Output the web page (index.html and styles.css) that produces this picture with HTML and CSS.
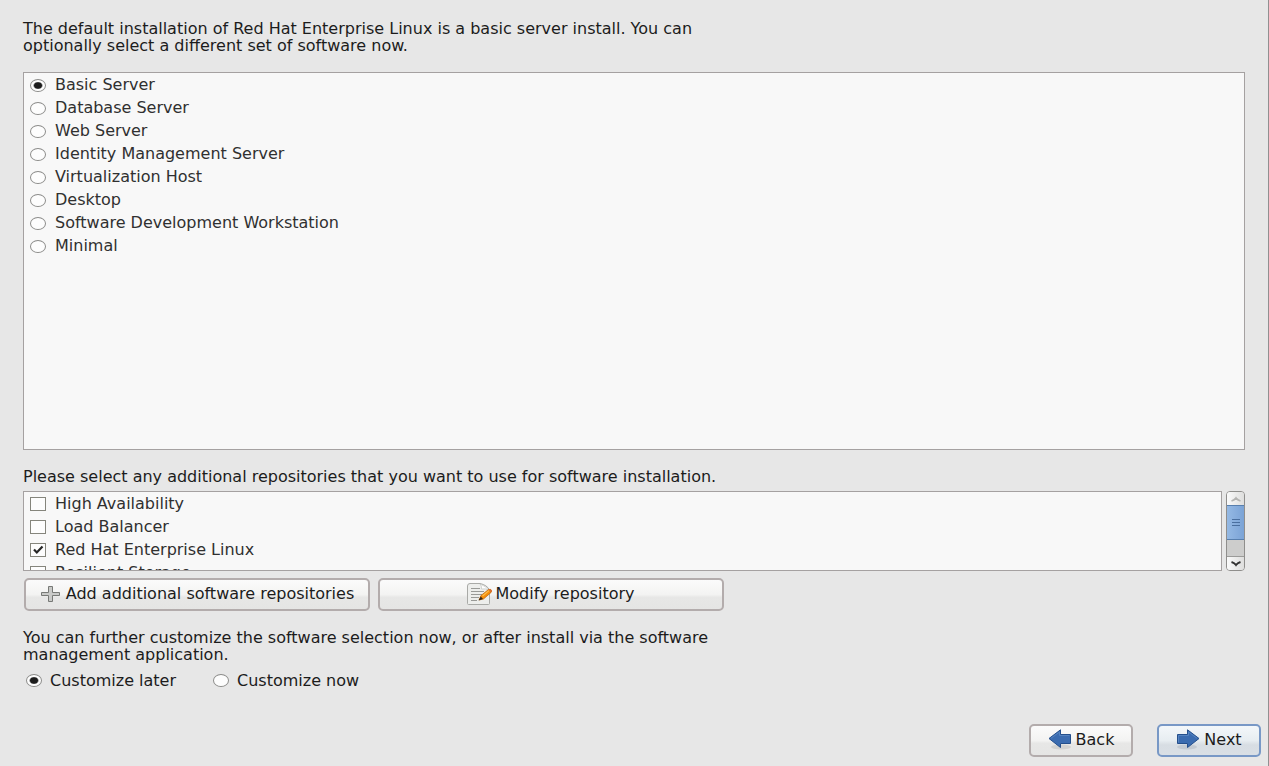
FILE: index.html
```html
<!DOCTYPE html>
<html lang="en">
<head>
<meta charset="utf-8">
<title>Software selection</title>
<link rel="stylesheet" href="styles.css">
</head>
<body>
<form class="installer">
  <main class="content">
    <p class="text intro">The default installation of Red Hat Enterprise Linux is a basic server install. You can optionally select a different set of software now.</p>

    <div class="panel packages" role="radiogroup" aria-label="Software set">
      <label class="row"><input class="radio" type="radio" name="set" checked>Basic Server</label>
      <label class="row"><input class="radio" type="radio" name="set">Database Server</label>
      <label class="row"><input class="radio" type="radio" name="set">Web Server</label>
      <label class="row"><input class="radio" type="radio" name="set">Identity Management Server</label>
      <label class="row"><input class="radio" type="radio" name="set">Virtualization Host</label>
      <label class="row"><input class="radio" type="radio" name="set">Desktop</label>
      <label class="row"><input class="radio" type="radio" name="set">Software Development Workstation</label>
      <label class="row"><input class="radio" type="radio" name="set">Minimal</label>
    </div>

    <p class="text wide">Please select any additional repositories that you want to use for software installation.</p>

    <div class="repos">
      <div class="panel repo-list">
        <label class="row"><input class="check" type="checkbox">High Availability</label>
        <label class="row"><input class="check" type="checkbox">Load Balancer</label>
        <label class="row"><input class="check" type="checkbox" checked>Red Hat Enterprise Linux</label>
        <label class="row"><input class="check" type="checkbox">Resilient Storage</label>
      </div>
      <div class="scrollbar">
        <button class="step" type="button" aria-label="Scroll up" disabled>
          <svg class="chevron" viewBox="0 0 10 6"><path d="M0.500 5Q3.500 4 5 2Q6.500 4 9.500 5" fill="none" stroke="#b4b4b2" stroke-width="1.800"/></svg>
        </button>
        <div class="thumb"><svg class="grip" viewBox="0 0 8 8"><path d="M0 .5H8M0 3.500H8M0 6.500H8" stroke="#4a6f9f"/></svg></div>
        <div class="trough"></div>
        <button class="step" type="button" aria-label="Scroll down">
          <svg class="chevron" viewBox="0 0 10 6"><path d="M0.500 1Q3.500 2 5 4Q6.500 2 9.500 1" fill="none" stroke="#333" stroke-width="2"/></svg>
        </button>
      </div>
    </div>

    <div class="repo-actions">
      <button class="button" type="button">
        <svg class="icon-plus" viewBox="0 0 21 18"><path d="M8.500 1.500H12.500V7.500H19.500V10.500H12.500V16.500H8.500V10.500H1.500V7.500H8.500Z" fill="#c9cac8" stroke="#777976"/></svg>
        Add additional software repositories
      </button>
      <button class="button" type="button">
        <svg class="icon-edit" viewBox="0 0 25 22">
          <path d="M3 .5H13Q20 2 22.500 7V20.500Q22.500 21.500 21.500 21.500H1.500Q.5 21.500 .5 20.500V3Q.5 .5 3 .5Z" fill="#edeeec" stroke="#a9aaa7"/>
          <path d="M13 1Q15 3 14.500 6Q19 5 22 7.500Q19 3 13 1Z" fill="#fff" stroke="#bbbcb9" stroke-width=".6"/>
          <path d="M4 5.500H13M4 8.500H17M4 11.500H15M4 14.500H12M4 17.500H10" stroke="#999a97"/>
          <path d="M12 17L14 12.500L21.500 6.500Q24 5.500 24.700 8L24 9.500L16.500 16Z" fill="#f58d0a" stroke="#b9610a" stroke-width=".7"/>
          <path d="M15.500 13L22 7.600" stroke="#ffc04a" stroke-width="1.200"/>
          <path d="M11.500 17.500L13.800 13.500L16 16Z" fill="#39291a"/>
          <path d="M21.500 6.500L24 9.500L24.800 8Q24 5.200 21.500 6.500Z" fill="#db6d32"/>
        </svg>
        Modify repository
      </button>
    </div>

    <p class="text">You can further customize the software selection now, or after install via the software management application.</p>

    <div class="customize" role="radiogroup" aria-label="Customize">
      <label class="choice"><input class="radio" type="radio" name="when" checked>Customize later</label>
      <label class="choice"><input class="radio" type="radio" name="when">Customize now</label>
    </div>
  </main>

  <footer class="nav">
    <button class="button" type="button">
      <svg class="icon-arrow" viewBox="0 0 24 21"><ellipse cx="13" cy="18" rx="10" ry="2.500" fill="#d2d2d1"/><path d="M1 9.500L12.500 .8V5.500H22.500V14.500H12.500V18.500Z" fill="#3b6cb0" stroke="#244f8c"/><path d="M3 9.300L11.500 3V6.500H21.500" fill="none" stroke="#5583c0"/></svg>
      Back
    </button>
    <button class="button default" type="submit">
      <svg class="icon-arrow" viewBox="0 0 24 21"><ellipse cx="11" cy="18" rx="10" ry="2.500" fill="#c3cad2"/><path d="M23 9.500L11.500 .8V5.500H1.500V14.500H11.500V18.500Z" fill="#3b6cb0" stroke="#244f8c"/><path d="M2.500 13.500V6.500H12.500V3L21 9.300" fill="none" stroke="#5583c0"/></svg>
      Next
    </button>
  </footer>
</form>
</body>
</html>
```
FILE: styles.css
```css
* { box-sizing: border-box; }

body {
  margin: 0;
  background: #e7e7e7;
  color: #1c1c1c;
  font: 16px/17px "DejaVu Sans", sans-serif;
}

.installer {
  display: flex;
  flex-direction: column;
  min-height: 100vh;
  padding: 20px 0 9px;
  border-right: 1px solid #919191;
}

.content {
  flex: 1;
  display: flex;
  flex-direction: column;
  padding: 0 23px;
}

.text { margin: 0; max-width: 720px; }
.text.wide { max-width: none; }
.intro { margin-bottom: 18px; }

.panel {
  background: #f8f8f8;
  border: 1px solid #a5a1a1;
  color: #303030;
}

.packages { flex: 1; margin-bottom: 18px; }

.row {
  display: flex;
  align-items: center;
  gap: 9px;
  height: 23px;
  padding-left: 6px;
}

.radio, .check {
  appearance: none;
  flex: none;
  width: 16px;
  height: 13px;
  margin: 1px 0 0;
  border: 1px solid #8c8c8a;
  background: #fdfdfd;
}

.radio { border-radius: 50%; }
.radio:checked { background: #fdfdfd radial-gradient(ellipse 5px 4px, #1d1d1d 70%, transparent); }
.check { height: 14px; border-color: #85857c; }
.check:checked {
  background: #fdfdfd url("data:image/svg+xml,%3Csvg xmlns='http://www.w3.org/2000/svg' viewBox='0 0 14 12'%3E%3Cpath d='M3 5.500L5.800 8.500L11.500 2.500' fill='none' stroke='%23262626' stroke-width='2.200'/%3E%3C/svg%3E") center / 14px 12px no-repeat;
}

.repos {
  display: flex;
  gap: 4px;
  height: 80px;
  margin: 6px 0 7px;
}

.repo-list { flex: 1; overflow: hidden; }

.scrollbar {
  display: flex;
  flex-direction: column;
  width: 19px;
  border: 1px solid #8f8e8c;
  border-radius: 4px;
  overflow: hidden;
}

.step {
  display: flex;
  align-items: center;
  justify-content: center;
  height: 13px;
  padding: 0;
  border: 0;
  background: linear-gradient(90deg, #fafafa, #dededd);
}

.chevron { width: 10px; height: 6px; }

.thumb {
  display: flex;
  align-items: center;
  justify-content: center;
  height: 35px;
  border: solid #587fae;
  border-width: 1px 0;
  background: linear-gradient(90deg, #95b9e4, #7ba3d6);
}

.grip { width: 8px; height: 8px; }
.trough { flex: 1; background: #cdcdcc; border-bottom: 1px solid #9b9b99; }

.button {
  display: flex;
  align-items: center;
  justify-content: center;
  height: 33px;
  padding: 0 6px 2px;
  border: 2px solid #b3acac;
  border-radius: 5px;
  background: linear-gradient(#fbfbfb, #f3f3f2 50%, #e7e7e6 60%, #e5e5e4);
  color: #1c1c1c;
  font: inherit;
}

.button.default {
  border-color: #7898c6;
  background: linear-gradient(#f3f7fa, #e7edf1 50%, #d7dde3 65%, #d9dfe5);
}

.repo-actions {
  display: grid;
  grid-template-columns: 1fr 1fr;
  gap: 8px;
  width: 701px;
  max-width: 100%;
  margin-bottom: 18px;
  padding-left: 1px;
}

.icon-plus { width: 21px; height: 18px; margin-right: 5px; }
.icon-edit { width: 25px; height: 22px; margin-right: 3px; }
.icon-arrow { width: 24px; height: 21px; margin-right: 4px; }

.customize {
  display: flex;
  gap: 37px;
  margin: 6px 0 33px;
  padding-left: 3px;
}

.choice {
  display: flex;
  align-items: center;
  gap: 8px;
  height: 22px;
}

.nav {
  display: flex;
  justify-content: flex-end;
  gap: 24px;
  padding: 0 7px;
}

.nav .button { min-width: 104px; }
```
